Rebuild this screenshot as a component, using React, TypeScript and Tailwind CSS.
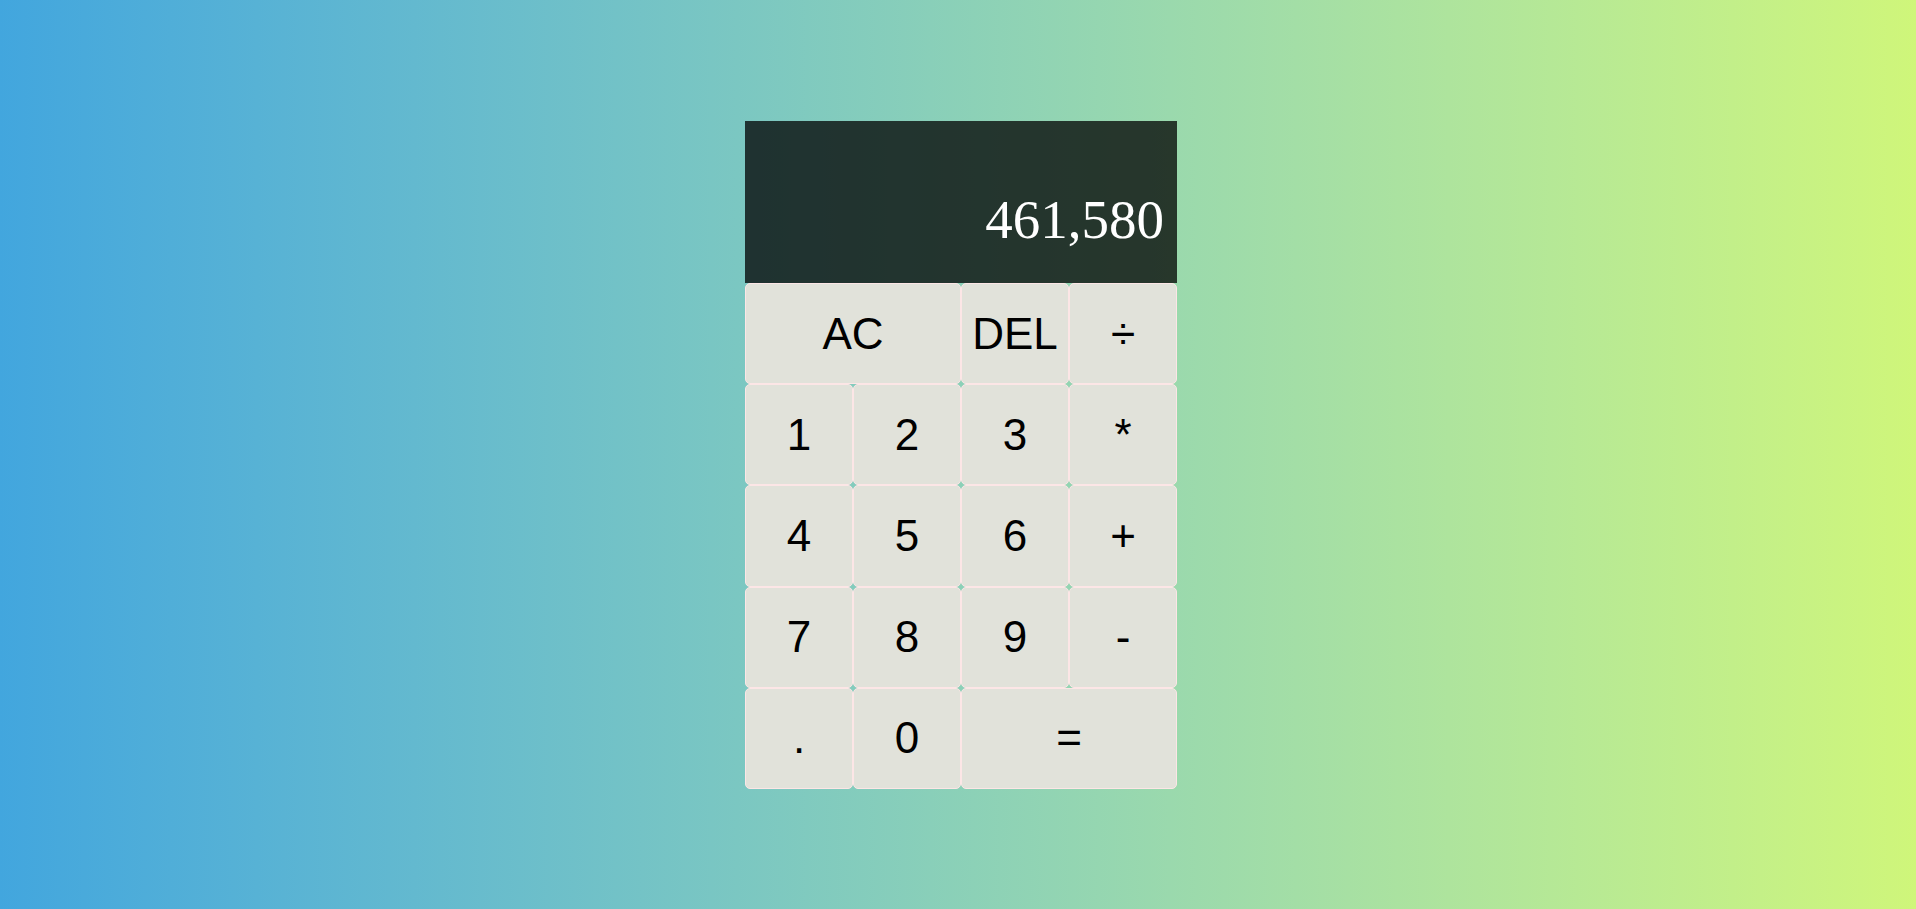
import React from "react";

const keys: { label: string; span?: boolean }[] = [
  { label: "AC", span: true },
  { label: "DEL" },
  { label: "÷" },
  { label: "1" },
  { label: "2" },
  { label: "3" },
  { label: "*" },
  { label: "4" },
  { label: "5" },
  { label: "6" },
  { label: "+" },
  { label: "7" },
  { label: "8" },
  { label: "9" },
  { label: "-" },
  { label: "." },
  { label: "0" },
  { label: "=", span: true },
];

export default function App() {
  return (
    <div className="min-h-screen w-full bg-gradient-to-r from-[#42a6de] to-[#cff67a] flex justify-center pt-[121px]">
      <div className="ml-[6px] w-[432px] flex flex-col">
        <div className="h-[162px] bg-black/75 flex items-end justify-end pr-[13px] pb-[36px]">
          <span className="text-white text-[55px] leading-none font-['Liberation_Serif',serif]">
            461,580
          </span>
        </div>
        <div className="grid grid-cols-4 auto-rows-[101.2px]">
          {keys.map((k, i) => (
            <button
              key={i}
              className={`${k.span ? "col-span-2" : ""} bg-[#e1e2da] border border-[#fce6e6] rounded-[5px] text-black text-[44px] leading-none font-['Liberation_Sans',Arial,sans-serif] flex items-center justify-center`}
            >
              {k.label}
            </button>
          ))}
        </div>
      </div>
    </div>
  );
}
